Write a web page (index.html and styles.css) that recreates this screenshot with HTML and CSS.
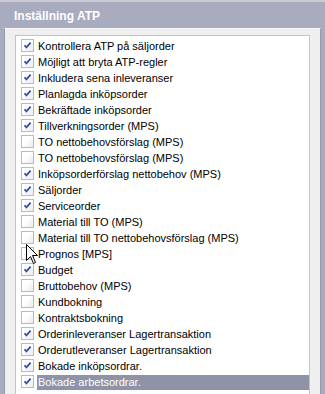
FILE: index.html
```html
<!DOCTYPE html>
<html lang="sv">

<head>
    <meta charset="UTF-8">
    <title>Inställning ATP</title>
    <link rel="stylesheet" href="styles.css">
</head>

<body>
    <div class="top-strip"></div>
    <h1 class="header">Inställning ATP</h1>

    <div class="panel">
        <ul class="list">
            <li class="row"><span class="box checked"></span><span class="label">Kontrollera ATP på säljorder</span></li>
            <li class="row"><span class="box checked"></span><span class="label">Möjligt att bryta ATP-regler</span></li>
            <li class="row"><span class="box checked"></span><span class="label">Inkludera sena inleveranser</span></li>
            <li class="row"><span class="box checked"></span><span class="label">Planlagda inköpsorder</span></li>
            <li class="row"><span class="box checked"></span><span class="label">Bekräftade inköpsorder</span></li>
            <li class="row"><span class="box checked"></span><span class="label">Tillverkningsorder (MPS)</span></li>
            <li class="row"><span class="box"></span><span class="label">TO nettobehovsförslag (MPS)</span></li>
            <li class="row"><span class="box"></span><span class="label">TO nettobehovsförslag (MPS)</span></li>
            <li class="row"><span class="box checked"></span><span class="label">Inköpsorderförslag nettobehov (MPS)</span></li>
            <li class="row"><span class="box checked"></span><span class="label">Säljorder</span></li>
            <li class="row"><span class="box checked"></span><span class="label">Serviceorder</span></li>
            <li class="row"><span class="box"></span><span class="label">Material till TO (MPS)</span></li>
            <li class="row"><span class="box"></span><span class="label">Material till TO nettobehovsförslag (MPS)</span></li>
            <li class="row"><span class="box"></span><span class="label">Prognos [MPS]</span></li>
            <li class="row"><span class="box checked"></span><span class="label">Budget</span></li>
            <li class="row"><span class="box"></span><span class="label">Bruttobehov (MPS)</span></li>
            <li class="row"><span class="box"></span><span class="label">Kundbokning</span></li>
            <li class="row"><span class="box"></span><span class="label">Kontraktsbokning</span></li>
            <li class="row"><span class="box checked"></span><span class="label">Orderinleveranser Lagertransaktion</span></li>
            <li class="row"><span class="box checked"></span><span class="label">Orderutleveranser Lagertransaktion</span></li>
            <li class="row"><span class="box checked"></span><span class="label">Bokade inköpsordrar.</span></li>
            <li class="row selected"><span class="box checked"></span><span class="label">Bokade arbetsordrar.</span></li>
        </ul>
    </div>

    <!-- muspekaren ligger ovanpå listan -->
    <svg class="cursor" width="13" height="21" viewBox="0 0 13 21">
        <path d="M0.5 0.5 L0.5 16.5 L4.5 12.5 L7.5 19.5 L9.5 18.5 L6.5 11.5 L11.5 11.5 Z" fill="#fff" stroke="#000" stroke-width="1"/>
    </svg>
</body>

</html>
```

FILE: styles.css
```css
body {
    margin: 0;
    width: 325px;
    height: 394px;
    overflow: hidden;
    background: #a9abbf;
    font-family: "Liberation Sans", Arial, sans-serif;
    position: relative;
}

.top-strip {
    height: 2px;
    background: #c9cad2;
}

.header {
    margin: 0;
    height: 23px;
    padding: 3px 14px 0;
    line-height: 23px;
    font-size: 12px;
    font-weight: bold;
    color: #fff;
}

.panel {
    margin: 0 4px;
    height: 366px;
    padding: 6px 10px 0;
    background: #efefef;
    border-left: 1px solid #9698ab;
    border-right: 1px solid #9698ab;
    border-top: 1px solid #f8f8f8;
    box-sizing: border-box;
}

.list {
    list-style-type: none;
    margin: 0;
    padding: 2px 0 0 5px;
    height: 100%;
    background: #fff;
    border: 1px solid #c4c4c4;
    border-bottom: none;
    box-sizing: border-box;
}

.row {
    display: flex;
    height: 16px;
    font-size: 11px;
    color: #000;
}

.box {
    width: 11px;
    height: 11px;
    margin-top: 1px;
    border: 1px solid #b9b9c0;
    background: linear-gradient(135deg, #ffffff 40%, #ebebeb);
    flex: none;
}

.box.checked {
    background-image: url("data:image/svg+xml,%3Csvg xmlns='http://www.w3.org/2000/svg' width='11' height='11'%3E%3Cpolyline points='2.5,5.2 4.4,7.4 8.6,2.6' fill='none' stroke='%233348b4' stroke-width='1.7'/%3E%3C/svg%3E"), linear-gradient(135deg, #ffffff 40%, #ebebeb);
}

.label {
    flex: 1;
    height: 15px;
    margin: 1px 0 0 3px;
    padding-left: 1px;
    line-height: 15px;
    white-space: nowrap;
}

.selected .label {
    background: #8e93a8;
    color: #fff;
}

.cursor {
    position: absolute;
    left: 26px;
    top: 244px;
}
```
